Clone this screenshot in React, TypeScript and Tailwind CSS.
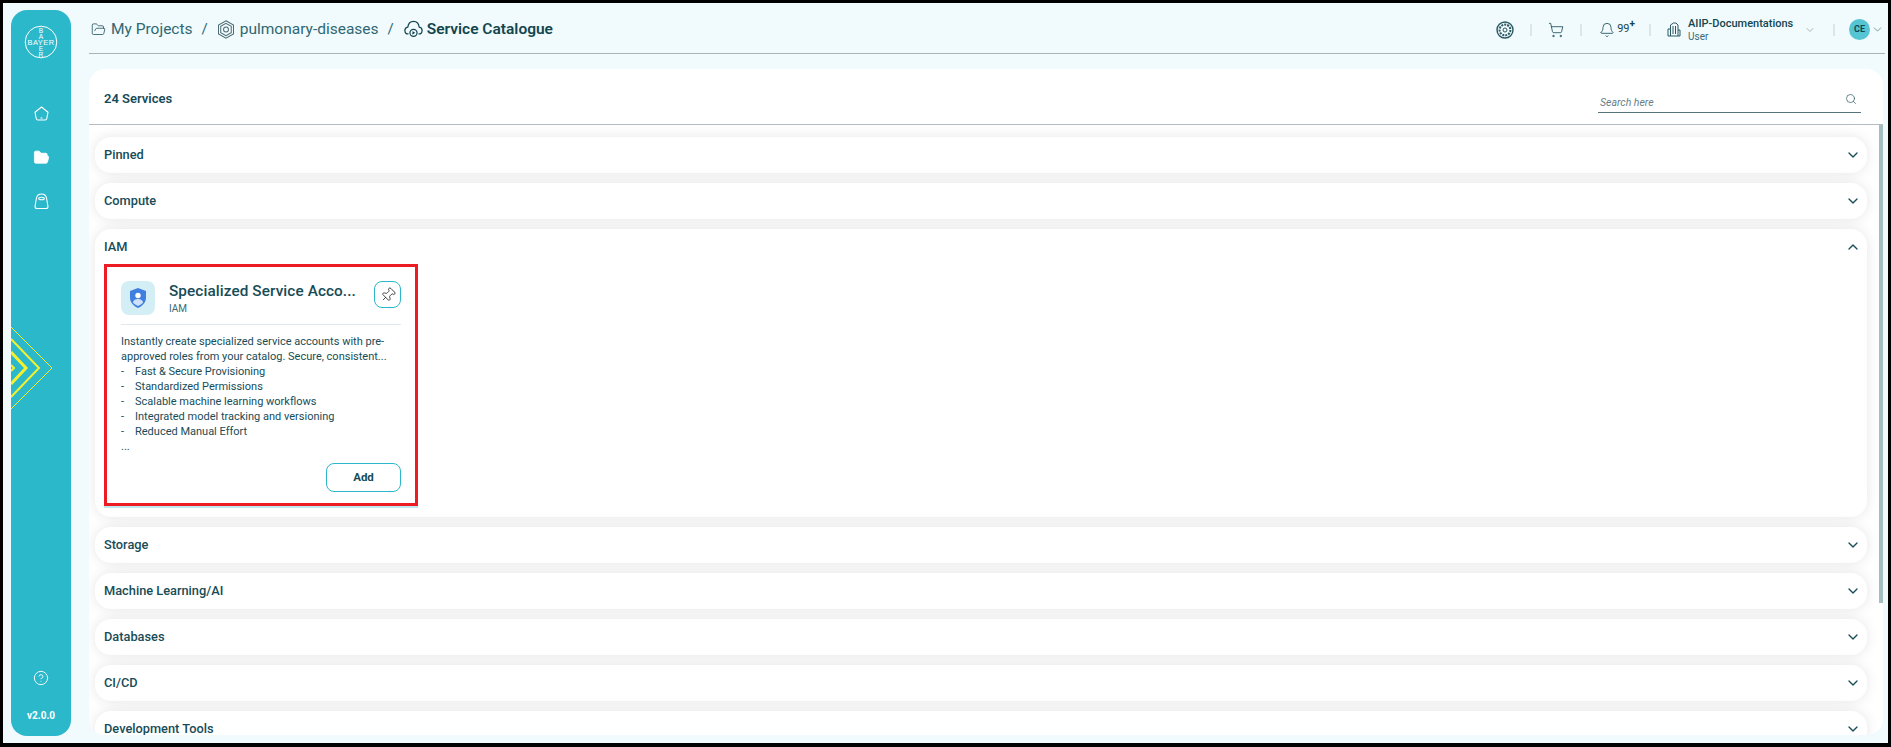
import { ChevronDown, ChevronUp, Search, ShoppingCart, Bell, Pin, CircleHelp, FolderOpen } from "lucide-react";

const font = { fontFamily: 'Roboto, "Noto Sans", sans-serif' };

function BayerLogo() {
  return (
    <svg width="34" height="34" viewBox="0 0 34 34" fill="none" className="text-white">
      <circle cx="17" cy="17" r="15.8" stroke="currentColor" strokeWidth="1" />
      <text x="17" y="19.7" textAnchor="middle" fontSize="7.4" fill="currentColor" letterSpacing="0.5" fontFamily="Liberation Sans">BAYER</text>
      {["B", "A", "", "E", "R"].map((c, i) => (
        <text key={i} x="17" y={7.5 + i * 6.1} textAnchor="middle" fontSize="6.6" fill="currentColor" fontFamily="Liberation Sans">{c}</text>
      ))}
    </svg>
  );
}

function Chevrons() {
  return (
    <svg width="60" height="84" viewBox="0 0 60 84" fill="none" className="absolute left-0 top-[316px]" stroke="#f4f02e">
      <path d="M0 1 L41 42 L0 83" strokeWidth="1" />
      <path d="M0 13 L28 42 L0 71" strokeWidth="2" />
      <path d="M0 26 L15 42 L0 58" strokeWidth="3" />
      <path d="M0 39 L3 42 L0 45" strokeWidth="2" />
    </svg>
  );
}

function Target() {
  return (
    <svg width="18" height="18" viewBox="0 0 18 18" fill="none" stroke="#2b5a63">
      <circle cx="9" cy="9" r="8" strokeWidth="1.4" />
      <circle cx="9" cy="9" r="5.4" strokeWidth="2" strokeDasharray="2 1" />
      <circle cx="9" cy="9" r="2" strokeWidth="1" />
    </svg>
  );
}

function Hex() {
  return (
    <svg width="18" height="19" viewBox="0 0 16 17" fill="none" stroke="#4a6b72" strokeWidth="0.9">
      <path d="M8 .7l6.7 3.9v7.8L8 16.300l-6.7-3.900V4.600z" />
      <path d="M8 3l4.700 2.700v5.600L8 14l-4.700-2.700V5.700z" />
      <circle cx="8" cy="8.500" r="2.200" />
    </svg>
  );
}

function CloudIcon() {
  return (
    <svg width="19" height="19" viewBox="0 0 17 17" fill="none" stroke="#12464f" strokeWidth="1.1">
      <path d="M4 12.500C2 12.500.8 11 .8 9.300c0-1.600 1.100-2.800 2.600-3C3.800 3.400 5.800 1.200 8.500 1.200c2.700 0 4.700 2.200 5.100 5.100 1.500.2 2.600 1.400 2.600 3 0 1.700-1.200 3.200-3.200 3.200" />
      <circle cx="8.500" cy="11.500" r="3.200" />
      <path d="M7.500 10.500l1.500 1-1.500 1" />
    </svg>
  );
}

function Building() {
  return (
    <svg width="14" height="15" viewBox="0 0 14 15" fill="none" stroke="#2b5a63" strokeWidth="1">
      <path d="M3.500 14V3l3-2h2.500l2 2v11z" />
      <path d="M3.500 7H1v7h2.500M11 8h2v6h-2M6 4v8M8.500 4v8" />
    </svg>
  );
}

function Sep() {
  return <div className="h-3 w-0.5 bg-[#dfe4e6]" />;
}

function Sidebar() {
  return (
    <aside className="relative flex w-[60px] shrink-0 flex-col items-center overflow-hidden rounded-2xl bg-[#2bb8cb] pt-[15px] text-white">
      <BayerLogo />
      <svg width="15" height="15" viewBox="0 0 15 15" fill="none" stroke="white" strokeWidth="1.1" className="mt-[47px]">
        <path d="M7.500 1L14 6.200l-1.200 6.300c-.2.900-.8 1.500-1.700 1.500H3.900c-.9 0-1.500-.6-1.700-1.500L1 6.200z" strokeLinejoin="round" />
        <path d="M6.500 12h2" />
      </svg>
      <FolderOpen size={17} strokeWidth={1.2} fill="white" className="mt-[28px]" />
      <svg width="15" height="17" viewBox="0 0 15 17" fill="none" stroke="white" strokeWidth="1.1" className="mt-[27px]">
        <path d="M3 15.500h9c1.200 0 2-.8 2-2L12.500 5C12 2.500 10 1 7.500 1S3 2.500 2.500 5L1 13.500c0 1.200.8 2 2 2z" />
        <ellipse cx="7.500" cy="5.500" rx="2.800" ry="1.300" />
      </svg>
      <Chevrons />
      <CircleHelp size={16} strokeWidth={1.4} className="mt-auto" />
      <div className="mb-[13px] mt-[22px] text-[10px] font-bold">v2.0.0</div>
    </aside>
  );
}

function Header() {
  return (
    <header className="flex h-[44px] shrink-0 items-center border-b border-[#a9b3b7] pb-[4px] pl-[2px]">
      <FolderOpen size={15} strokeWidth={1.2} className="text-[#12464f]" />
      <span className="ml-[5px] text-[15.5px] text-[#2f6872]">My Projects</span>
      <span className="mx-[9px] text-[15px] text-[#2f6872]">/</span>
      <Hex />
      <span className="ml-[5px] text-[15.5px] text-[#2f6872]">pulmonary-diseases</span>
      <span className="ml-[9px] mr-[10px] text-[15px] text-[#2f6872]">/</span>
      <CloudIcon />
      <span className="ml-[4px] text-[15.5px] font-semibold text-[#12464f]">Service Catalogue</span>

      <div className="ml-auto flex items-center">
        <Target />
        <div className="ml-[16px]"><Sep /></div>
        <ShoppingCart size={16} strokeWidth={1.2} className="ml-[16px] text-[#12464f]" />
        <div className="ml-[16px]"><Sep /></div>
        <Bell size={16} strokeWidth={1.2} className="ml-[17px] text-[#12464f]" />
        <span className="ml-[2px] text-[11px] text-[#12464f]">99<sup className="text-[10px] font-bold">+</sup></span>
        <div className="ml-[14px]"><Sep /></div>
        <div className="ml-[16px]"><Building /></div>
        <div className="ml-[7px] flex w-[104px] flex-col leading-none">
          <span className="whitespace-nowrap text-[11px] font-medium text-[#12464f]">AIIP-Documentations</span>
          <span className="mt-[3px] text-[10px] text-[#3a6a73]">User</span>
        </div>
        <ChevronDown size={12} strokeWidth={1.2} className="ml-[12px] text-[#6f8c92]" />
        <div className="ml-[17px]"><Sep /></div>
        <div className="ml-[14px] flex h-[21px] w-[21px] items-center justify-center rounded-full bg-[#55c5d4] text-[9px] font-bold text-[#12464f]">CE</div>
        <ChevronDown size={13} strokeWidth={1.2} className="ml-[1px] mr-[1px] text-[#3a6a73]" />
      </div>
    </header>
  );
}

function Row({ label }: { label: string }) {
  return (
    <div className="flex h-9 shrink-0 items-center justify-between rounded-2xl bg-white pl-[9px] pr-[6px] shadow-[0_0_14px_rgba(0,0,0,0.1)]">
      <span className="text-[12.8px] font-medium text-[#174c57]">{label}</span>
      <ChevronDown size={16} strokeWidth={2} className="text-[#174c57]" />
    </div>
  );
}

const bullets = [
  "Fast & Secure Provisioning",
  "Standardized Permissions",
  "Scalable machine learning workflows",
  "Integrated model tracking and versioning",
  "Reduced Manual Effort",
];

function ServiceCard() {
  return (
    <div className="flex h-[242px] w-[314px] flex-col border-[3px] border-[#ed1c24] bg-white px-[14px] pt-[14px] shadow-[0_2px_0_#bfe8ee]">
      <div className="flex h-[44px] border-b border-[#e1e7ea]">
        <div className="flex h-[34px] w-[34px] shrink-0 items-center justify-center rounded-lg bg-[#d3eff5]">
          <svg width="18" height="20" viewBox="0 0 18 20">
            <path d="M9 0l8 3v6.500c0 4.800-3.400 8.600-8 10.500C4.400 18.100 1 14.300 1 9.500V3z" fill="#3f7fe0" />
            <circle cx="9" cy="7.500" r="2.700" fill="white" />
            <path d="M3.800 14.500C4.500 12 6.500 11 9 11s4.500 1 5.200 3.500C12.800 16 11 17.200 9 18c-2-.8-3.800-2-5.200-3.500z" fill="#cfe0fa" />
          </svg>
        </div>
        <div className="ml-[14px] flex min-w-0 flex-1 flex-col">
          <span className="whitespace-nowrap text-[15.3px] font-medium leading-[20px] tracking-[0.1px] text-[#174c57]">Specialized Service Acco...</span>
          <span className="mt-[2px] text-[10px] leading-[12px] text-[#3a6a73]">IAM</span>
        </div>
        <button className="ml-[15px] flex h-[27px] w-[27px] shrink-0 items-center justify-center rounded-lg border border-[#2bb8cb]">
          <Pin size={16} strokeWidth={1.2} className="rotate-45 text-[#222]" />
        </button>
      </div>
      <div className="mt-[9px] text-[11px] leading-[15px] text-[#174c57]">
        <p>Instantly create specialized service accounts with pre-<br />approved roles from your catalog. Secure, consistent...</p>
        {bullets.map((b) => (
          <div key={b} className="flex">
            <span className="w-[14px]">-</span>
            <span>{b}</span>
          </div>
        ))}
        <div>...</div>
      </div>
      <button className="mb-[11px] ml-auto mt-auto h-[29px] w-[75px] rounded-lg border border-[#2bb8cb] text-[11.5px] font-bold text-[#174c57]">Add</button>
    </div>
  );
}

export default function App() {
  return (
    <div style={font} className="flex h-[747px] w-[1891px] gap-[18px] overflow-hidden border-[3px] border-b-[4px] border-black bg-[#f1fafd] pb-[7px] pl-[8px] pr-[3px] pt-[7px]">
      <Sidebar />
      <main className="flex min-w-0 flex-1 flex-col">
        <Header />
        <section className="mb-[1px] mr-[2px] mt-[15px] flex min-h-0 flex-1 flex-col overflow-hidden rounded-2xl bg-white">
          <div className="flex h-[56px] shrink-0 items-center justify-between border-b border-[#b5bcbf] pl-[15px] pr-[22px]">
            <span className="pt-[4px] text-[13px] font-semibold text-[#174c57]">24 Services</span>
            <div className="mt-[12px] flex h-[21px] w-[263px] items-center justify-between border-b border-[#57737a]">
              <span className="pl-[2px] pt-[2px] text-[10.5px] italic text-[#66808a]">Search here</span>
              <Search size={12} strokeWidth={1.3} className="mb-[7px] mr-[4px] text-[#174c57]" />
            </div>
          </div>
          <div className="flex min-h-0 flex-1">
            <div className="flex min-w-0 flex-1 flex-col gap-[10px] overflow-hidden pl-[6px] pr-[12px] pt-[12px]">
              <Row label="Pinned" />
              <Row label="Compute" />
              <div className="flex h-[288px] shrink-0 flex-col rounded-2xl bg-white pl-[9px] shadow-[0_0_14px_rgba(0,0,0,0.1)]">
                <div className="flex h-[35px] shrink-0 items-center justify-between pr-[6px]">
                  <span className="text-[12.8px] font-medium text-[#174c57]">IAM</span>
                  <ChevronUp size={16} strokeWidth={2} className="text-[#174c57]" />
                </div>
                <ServiceCard />
              </div>
              <Row label="Storage" />
              <Row label="Machine Learning/AI" />
              <Row label="Databases" />
              <Row label="CI/CD" />
              <Row label="Development Tools" />
            </div>
            <div className="h-[478px] w-1 shrink-0 bg-[#a3bdc1]" />
          </div>
        </section>
      </main>
    </div>
  );
}
